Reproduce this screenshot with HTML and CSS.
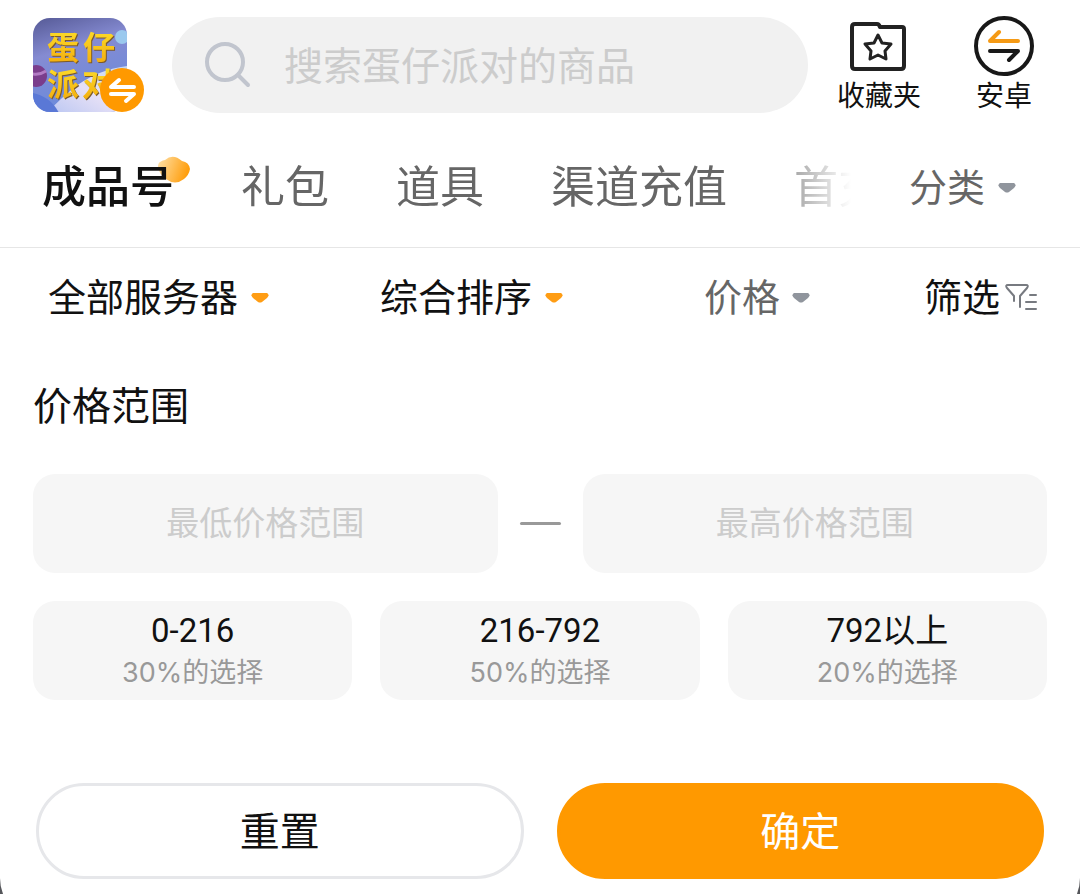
FILE: index.html
```html
<!DOCTYPE html>
<html lang="zh-CN">
<head>
  <meta charset="UTF-8" />
  <meta name="viewport" content="width=device-width, initial-scale=1.0"/>
  <title>蛋仔派对</title>
  <link rel="stylesheet" href="styles.css">
</head>
<body>
  <main class="page">

    <header class="header">
      <button type="button" class="game-logo" aria-label="切换游戏">
        <svg width="112" height="96" viewBox="0 0 112 96">
          <defs>
            <linearGradient id="sky" x1="0" y1="0" x2="0.3" y2="1">
              <stop offset="0" stop-color="#565a96"/>
              <stop offset="0.4" stop-color="#858bd2"/>
              <stop offset="1" stop-color="#6a8bdc"/>
            </linearGradient>
            <linearGradient id="beam" x1="0" y1="1" x2="1" y2="0">
              <stop offset="0" stop-color="#b9c6f2"/>
              <stop offset="0.5" stop-color="#e6e0f6"/>
              <stop offset="1" stop-color="#c3d8f5"/>
            </linearGradient>
            <linearGradient id="gold" x1="0" y1="0" x2="0" y2="1">
              <stop offset="0" stop-color="#ffe62e"/>
              <stop offset="1" stop-color="#f2a80c"/>
            </linearGradient>
            <clipPath id="tile"><rect y="1" width="94" height="94" rx="17"/></clipPath>
          </defs>
          <g clip-path="url(#tile)">
            <rect y="1" width="94" height="94" fill="url(#sky)"/>
            <path d="M14 96 C30 80 52 54 94 49 V96 Z" fill="url(#beam)"/>
            <path d="M0 76 C10 78 20 84 26 96 H0 Z" fill="#5a78d6"/>
            <circle cx="3" cy="59" r="11" fill="#7a3d8c"/>
            <path d="M-6 55 Q4 60 13 54" stroke="#b27bc4" stroke-width="3" fill="none"/>
            <circle cx="89" cy="20" r="7" fill="#9bc9ee"/>
          </g>
          <g class="logo-text" fill="url(#gold)">
            <text x="14 50" y="42">蛋仔</text>
            <text x="14 49" y="79">派对</text>
          </g>
          <circle cx="89" cy="73" r="22" fill="#ff9900"/>
          <path d="M101 70 H78 L86 63 M78 77 H101 L93 84" fill="none" stroke="#fff" stroke-width="4" stroke-linecap="round" stroke-linejoin="round"/>
        </svg>
      </button>

      <label class="search">
        <svg width="48" height="48" viewBox="0 0 48 48" fill="none" stroke="#c1c5ce" stroke-width="4" stroke-linecap="round">
          <circle cx="21" cy="21" r="18"/>
          <path d="M34 34 L44 44"/>
        </svg>
        <input type="search" aria-label="搜索" placeholder="搜索蛋仔派对的商品">
      </label>

      <button type="button" class="header-btn">
        <svg width="60" height="60" viewBox="1 0 60 60" fill="none" stroke="#222" stroke-width="4" stroke-linejoin="round">
          <path d="M7 8 H29 Q31 8 32 11 H54 Q56 11 56 13 V50 Q56 53 53 53 H7 Q4 53 4 50 V11 Q4 8 7 8 Z"/>
          <path d="M30 19 L34 27 L43 28 L37 35 L38 43 L30 39 L22 43 L23 35 L17 28 L26 27 Z" stroke-width="3"/>
        </svg>
        <span>收藏夹</span>
      </button>

      <button type="button" class="header-btn">
        <svg width="60" height="60" viewBox="0 0 60 60" fill="none" stroke-width="4" stroke-linecap="round" stroke-linejoin="round">
          <circle cx="30" cy="30" r="28" stroke="#181818"/>
          <path d="M44 25 H16 L25 16" stroke="#f59a15"/>
          <path d="M16 35 H44 L35 44" stroke="#181818"/>
        </svg>
        <span>安卓</span>
      </button>
    </header>

    <nav class="nav">
      <div class="tabs">
        <a href="#" class="tab active">成品号
          <svg class="cloud" width="34" height="28" viewBox="0 0 34 28">
            <defs>
              <linearGradient id="cloud" x1="0" y1="0" x2="1" y2="0.3">
                <stop offset="0" stop-color="#ffe3ad"/>
                <stop offset="1" stop-color="#ff9f0f"/>
              </linearGradient>
            </defs>
            <path d="M3 6 Q6 4 8 4 Q16 -3 25 5 Q32 6 33 13 Q32 19 27 23 Q18 30 9 23 Q2 18 1 11 Q1 7 3 6 Z" fill="url(#cloud)"/>
          </svg>
        </a>
        <a href="#" class="tab">礼包</a>
        <a href="#" class="tab">道具</a>
        <a href="#" class="tab">渠道充值</a>
        <a href="#" class="tab">首充</a>
      </div>
      <select class="dropdown muted" aria-label="分类">
        <option>分类</option>
      </select>
    </nav>

    <div class="filters">
      <select class="dropdown" aria-label="服务器">
        <option>全部服务器</option>
      </select>
      <select class="dropdown" aria-label="排序">
        <option>综合排序</option>
      </select>
      <button type="button" class="dropdown muted">价格</button>
      <button type="button" class="filter-btn">
        筛选
        <svg width="34" height="30" viewBox="0 0 34 30" fill="none" stroke="#777a80" stroke-width="2" stroke-linecap="round" stroke-linejoin="round">
          <path d="M10 18 V13 L3 5 Q1 2 4 2 H22 Q25 2 23 5 L16 13 V24"/>
          <path d="M26 12 H32 M22 19 H32 M22 26 H32"/>
        </svg>
      </button>
    </div>

    <form class="price-form">
      <h2>价格范围</h2>
      <div class="range">
        <input type="text" inputmode="numeric" aria-label="最低价格" placeholder="最低价格范围">
        <span class="dash"></span>
        <input type="text" inputmode="numeric" aria-label="最高价格" placeholder="最高价格范围">
      </div>
      <div class="presets">
        <button type="button" class="preset">0-216<small>30%的选择</small></button>
        <button type="button" class="preset">216-792<small>50%的选择</small></button>
        <button type="button" class="preset">792以上<small>20%的选择</small></button>
      </div>
      <div class="actions">
        <button type="reset" class="btn">重置</button>
        <button type="submit" class="btn btn-primary">确定</button>
      </div>
    </form>

  </main>
</body>
</html>
```
FILE: styles.css
```css
* {
  box-sizing: border-box;
}

body {
  margin: 0;
  height: 100vh;
  overflow: hidden;
  background-color: #55565a;
  color: #111;
  font-family: Roboto, "Noto Sans CJK SC", sans-serif;
}

button,
input,
select {
  margin: 0;
  padding: 0;
  border: none;
  background: none;
  color: inherit;
  font: inherit;
}

button,
select {
  cursor: pointer;
}

svg {
  display: block;
  flex: none;
}

.page {
  background-color: #fff;
  border-radius: 0 0 44px 44px;
  padding-bottom: 43px;
}

/* Header */
.header {
  display: flex;
  align-items: flex-start;
  height: 116px;
  padding: 16px 46px 0 33px;
}

.game-logo {
  margin-top: 1px;
}

.logo-text {
  font-family: "Noto Sans CJK SC", sans-serif;
  font-size: 32px;
  font-weight: 700;
  filter: drop-shadow(1px 1px 0 #7a5a2c);
}

.search {
  flex: 1;
  min-width: 0;
  display: flex;
  align-items: center;
  gap: 32px;
  height: 96px;
  margin: 1px 29px 0 27px;
  padding: 0 32px;
  border-radius: 48px;
  background-color: #f1f1f1;
}

.search input {
  flex: 1;
  min-width: 0;
  padding-top: 4px;
  font-size: 39px;
  outline: none;
}

::placeholder {
  color: #ccc;
  opacity: 1;
}

.header-btn {
  display: flex;
  flex-direction: column;
  align-items: center;
  font-size: 28px;
  line-height: 42px;
}

.header-btn + .header-btn {
  margin-left: 53px;
}

/* Category tabs */
.nav {
  display: flex;
  align-items: center;
  height: 132px;
  padding: 12px 64px 0 42px;
  border-bottom: 1px solid #e6e6e6;
}

.tabs {
  flex: 1;
  min-width: 0;
  display: flex;
  gap: 67px;
  margin-right: 58px;
  overflow: hidden;
  -webkit-mask-image: linear-gradient(to left, transparent, #000 100px);
  mask-image: linear-gradient(to left, transparent, #000 100px);
}

.tab {
  position: relative;
  flex: none;
  color: #666;
  font-size: 44px;
  line-height: 72px;
  text-decoration: none;
}

.tab.active {
  color: #111;
  font-weight: 500;
}

.cloud {
  position: absolute;
  z-index: -1;
  top: 4px;
  right: -17px;
}

/* Dropdowns, the arrow sits at the right edge */
.dropdown {
  appearance: none;
  justify-self: start;
  padding-right: 30px;
  background: url("data:image/svg+xml,%3Csvg xmlns='http://www.w3.org/2000/svg' width='18' height='10'%3E%3Cpath d='M2 0H16Q19 2 16 5L11 9Q9 10 7 9L2 5Q-1 2 2 0Z' fill='%23ff9d14'/%3E%3C/svg%3E") no-repeat right center;
  font-size: 38px;
  line-height: 56px;
}

.dropdown.muted {
  color: #666;
  background-image: url("data:image/svg+xml,%3Csvg xmlns='http://www.w3.org/2000/svg' width='18' height='10'%3E%3Cpath d='M2 0H16Q19 2 16 5L11 9Q9 10 7 9L2 5Q-1 2 2 0Z' fill='%2390959d'/%3E%3C/svg%3E");
}

/* Filter row */
.filters {
  display: grid;
  grid-template-columns: 332fr 324fr 220fr auto;
  align-items: center;
  height: 100px;
  padding: 0 42px 0 48px;
}

.filter-btn {
  display: flex;
  align-items: center;
  gap: 4px;
  font-size: 38px;
  line-height: 56px;
}

/* Price panel */
.price-form {
  padding: 30px 33px 0;
}

.price-form h2 {
  margin: 0 0 38px;
  font-size: 39px;
  font-weight: 400;
  line-height: 58px;
}

.range {
  display: flex;
  align-items: center;
  gap: 22px;
}

.range input {
  flex: 1;
  min-width: 0;
  height: 99px;
  border-radius: 22px;
  background-color: #f6f6f6;
  font-size: 33px;
  text-align: center;
}

.dash {
  width: 41px;
  height: 3px;
  border-radius: 2px;
  background-color: #999;
}

.presets {
  display: grid;
  grid-template-columns: repeat(3, 1fr);
  gap: 28px;
  margin-top: 28px;
}

.preset {
  height: 99px;
  border-radius: 22px;
  background-color: #f6f6f6;
  font-size: 33px;
  line-height: 44px;
}

.preset small {
  display: block;
  color: #999;
  font-family: Inter, "Noto Sans CJK SC", sans-serif;
  font-size: 27px;
  line-height: 40px;
}

.actions {
  display: flex;
  gap: 33px;
  margin-top: 83px;
  padding: 0 3px;
}

.btn {
  flex: 1;
  height: 96px;
  padding-bottom: 4px;
  border: 3px solid #e6e7ea;
  border-radius: 48px;
  font-size: 40px;
}

.btn-primary {
  border-color: #ff9900;
  background-color: #ff9900;
  color: #fff;
}
```
